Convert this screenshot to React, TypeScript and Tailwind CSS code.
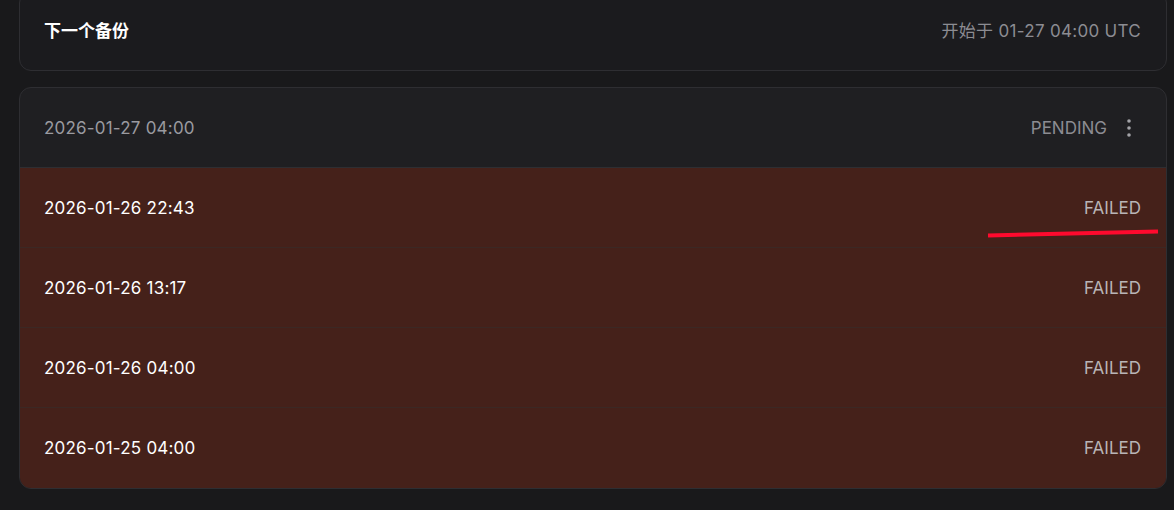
import React from "react";

const rows = [
  "2026-01-26 22:43",
  "2026-01-26 13:17",
  "2026-01-26 04:00",
  "2026-01-25 04:00",
];

export default function App() {
  return (
    <div
      className="relative w-[1174px] h-[510px] overflow-hidden bg-[#19191b] pl-[19px] pr-[7px] flex flex-col gap-[16px]"
      style={{ fontFamily: 'Inter, "Noto Sans CJK SC", sans-serif' }}
    >
      <div className="mt-[-9px] h-[80px] shrink-0 rounded-[12px] border border-[#2e2e32] bg-[#1b1b1e] flex items-center justify-between pl-[24px] pr-[25px] pt-[2px]">
        <span className="text-[17px] font-semibold text-white">下一个备份</span>
        <span className="text-[17px] text-[#8c8c92] tracking-[0.3px]">开始于 01-27 04:00 UTC</span>
      </div>

      <div className="shrink-0 rounded-[12px] border border-[#2e2e32] overflow-hidden bg-[#1f1f22]">
        <div className="h-[80px] flex items-center justify-between pl-[24px] pr-[25px] pt-[2px] border-b border-[#2e2e32]">
          <span className="text-[17px] text-[#9a9aa0] tracking-[0.2px]">2026-01-27 04:00</span>
          <div className="flex items-center gap-[10px]">
            <span className="text-[17px] text-[#8c8c92]">PENDING</span>
            <svg width="24" height="24" viewBox="0 0 24 24" fill="#a3a3a8" className="-mt-[2px]">
              <circle cx="12" cy="5" r="1.8" />
              <circle cx="12" cy="12" r="1.8" />
              <circle cx="12" cy="19" r="1.8" />
            </svg>
          </div>
        </div>
        {rows.map((r, i) => (
          <div
            key={r}
            className={`h-[80px] flex items-center justify-between pl-[24px] pr-[25px] pt-[2px] bg-[#45211a] ${i < rows.length - 1 ? "border-b border-[#3b2824]" : ""}`}
          >
            <span className="text-[17px] text-white tracking-[0.2px]">{r}</span>
            <span className="text-[17px] text-[#b9b4b6]">FAILED</span>
          </div>
        ))}
      </div>

      <svg
        className="absolute left-[985px] top-[228px]"
        width="176"
        height="12"
        viewBox="0 0 176 12"
      >
        <line x1="3" y1="7.5" x2="173" y2="3.5" stroke="#ff0a2e" strokeWidth="4" />
      </svg>
    </div>
  );
}
